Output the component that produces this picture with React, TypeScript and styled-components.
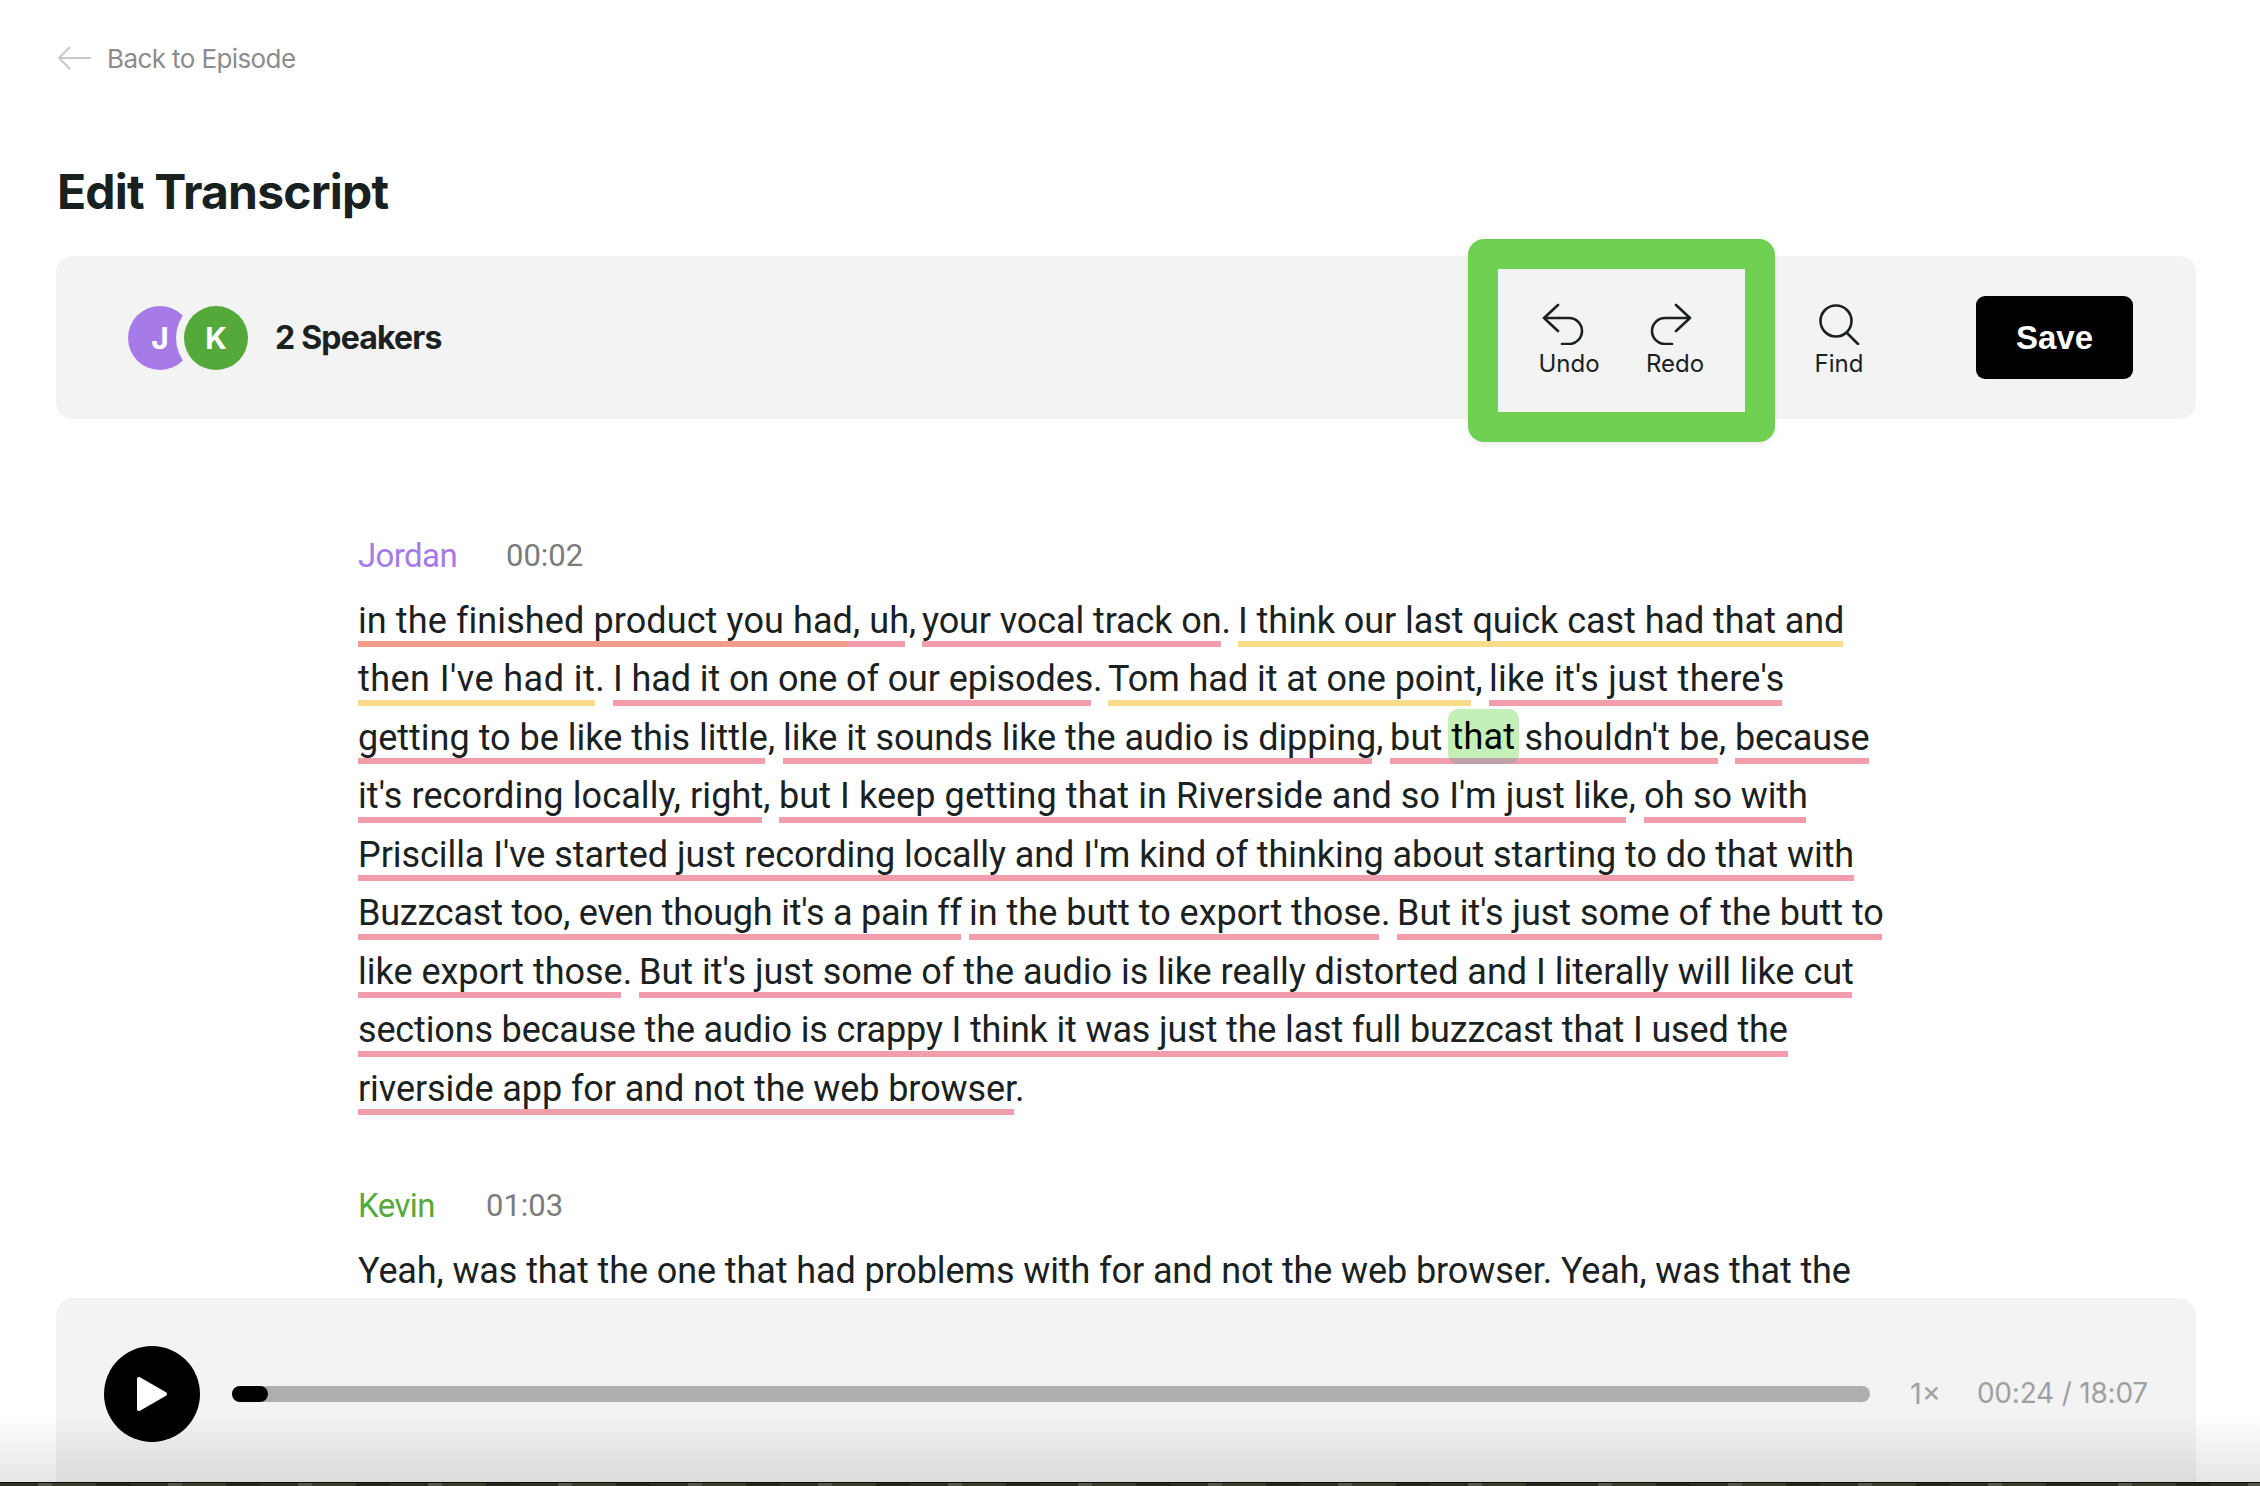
import styled, { createGlobalStyle } from "styled-components";

const GlobalStyle = createGlobalStyle`
  html, body {
    margin: 0;
    padding: 0;
    background: #ffffff;
  }
  body {
    font-family: "Inter", "Liberation Sans", sans-serif;
    color: #1a2120;
  }
`;

const Page = styled.div`
  position: relative;
  width: 2260px;
  height: 1486px;
  overflow: hidden;
  background: #ffffff;
`;

const BackLink = styled.a`
  display: flex;
  align-items: center;
  gap: 16px;
  height: 36px;
  padding: 40px 0 0 57px;
  color: #8c8c8c;
  font-size: 26px;
  letter-spacing: -0.6px;
`;

const Title = styled.h1`
  margin: 90px 0 0 57px;
  height: 52px;
  font-size: 48px;
  line-height: 52px;
  font-weight: 700;
  letter-spacing: -0.8px;
  color: #182120;
`;

const Toolbar = styled.div`
  display: flex;
  align-items: center;
  height: 163px;
  margin: 38px 64px 0 56px;
  padding: 0 63px 0 72px;
  background: #f3f3f3;
  border-radius: 16px;
`;

const Avatar = styled.div<{ $color: string; $ring?: boolean }>`
  display: flex;
  align-items: center;
  justify-content: center;
  width: 64px;
  height: 64px;
  border-radius: 50%;
  background: ${(p) => p.$color};
  color: #ffffff;
  font-size: 30px;
  font-weight: 700;
  ${(p) => p.$ring && "margin-left: -8px; box-shadow: 0 0 0 8px #f3f3f3;"}
`;

const SpeakerCount = styled.div`
  margin-left: 27px;
  font-size: 32px;
  font-weight: 700;
  letter-spacing: -0.8px;
`;

const Highlight = styled.div`
  display: flex;
  align-items: center;
  gap: 16px;
  box-sizing: border-box;
  width: 307px;
  height: 203px;
  margin: -17px 0 -23px auto;
  padding-left: 26px;
  border: 30px solid #6fd052;
  border-radius: 16px;
  background: #f3f3f3;
  box-shadow: 0 2px 6px rgba(0, 0, 0, 0.08);
`;

const Tool = styled.button<{ $left?: number; $top?: number }>`
  display: flex;
  flex-direction: column;
  align-items: center;
  gap: 4px;
  width: 90px;
  margin-left: ${(p) => p.$left ?? 0}px;
  margin-top: ${(p) => p.$top ?? 0}px;
  padding: 0;
  border: 0;
  background: none;
  color: #1a2120;
  font-family: inherit;
  font-size: 24px;
  line-height: 30px;
`;

const ToolIcon = styled.svg<{ $shift?: number }>`
  display: block;
  width: 42px;
  height: 42px;
  margin-left: ${(p) => p.$shift ?? 0}px;
  fill: none;
  stroke: #1a2120;
  stroke-width: 2.6;
  stroke-linecap: round;
  stroke-linejoin: round;
`;

const SaveButton = styled.button`
  width: 157px;
  height: 83px;
  margin-left: 92px;
  border: 0;
  border-radius: 9px;
  background: #000000;
  color: #ffffff;
  font-family: "Liberation Sans", Arial, sans-serif;
  font-size: 33px;
  font-weight: 700;
`;

const Transcript = styled.main`
  padding: 116px 0 0 358px;
  font-family: "Roboto", "Liberation Sans", sans-serif;
`;

const Block = styled.section`
  margin-bottom: 70px;
`;

const BlockHead = styled.div`
  display: flex;
  align-items: center;
  height: 40px;
  margin-bottom: 13.5px;
`;

const Speaker = styled.span<{ $color: string; $width: number }>`
  width: ${(p) => p.$width}px;
  color: ${(p) => p.$color};
  font-size: 33px;
  font-weight: 400;
  letter-spacing: -0.6px;
`;

const Stamp = styled.span`
  color: #7c7c7c;
  font-size: 31px;
`;

const Line = styled.div`
  display: flex;
  height: 58.5px;
  white-space: nowrap;
`;

const tones: Record<string, string> = {
  pink: "linear-gradient(#f19dac, #f19dac)",
  yellow: "linear-gradient(#f9dc8a, #f9dc8a)",
  mixed: "linear-gradient(90deg, #f29d8a 489px, #f19dac 489px)",
};

const Chunk = styled.span<{ $width: number; $gap: number; $tone: string; $track: number }>`
  box-sizing: border-box;
  flex: none;
  width: ${(p) => p.$width}px;
  height: 58.5px;
  margin-right: ${(p) => p.$gap}px;
  font-size: 36px;
  line-height: 64px;
  letter-spacing: ${(p) => p.$track}px;
  color: #1a2120;
  background: ${(p) => tones[p.$tone]} left bottom / 100% 6px no-repeat;
`;

const Word = styled.span`
  display: inline-block;
  height: 55px;
  margin: 3.5px -4px 0;
  padding: 0 4px;
  vertical-align: top;
  line-height: 57px;
  border-radius: 10px;
  color: #000000;
  background: linear-gradient(#c0a0a8, #c0a0a8) left bottom / 100% 6px no-repeat,
    #c4f0b8;
`;

const PlainLine = styled.div`
  font-size: 36px;
  line-height: 64px;
  letter-spacing: -0.1px;
  white-space: nowrap;
`;

const Player = styled.div`
  position: absolute;
  left: 56px;
  right: 64px;
  top: 1298px;
  bottom: 4px;
  display: flex;
  align-items: center;
  padding: 0 48px 0 48px;
  background: #f3f3f3;
  border-radius: 18px 18px 0 0;
  color: #a0a0a2;
  font-size: 29px;
  white-space: nowrap;
`;

const PlayButton = styled.button`
  display: flex;
  align-items: center;
  justify-content: center;
  flex: none;
  width: 96px;
  height: 96px;
  margin-top: 8px;
  padding: 0;
  border: 0;
  border-radius: 50%;
  background: #000000;
`;

const Track = styled.div`
  flex: none;
  width: 1638px;
  height: 16px;
  margin: 8px 40px 0 32px;
  border-radius: 8px;
  background: #aeaeb1;
`;

const TrackFill = styled.div<{ $width: number }>`
  width: ${(p) => p.$width}px;
  height: 16px;
  border-radius: 8px;
  background: #000000;
`;

const Speed = styled.span`
  width: 74px;
  margin-top: 6px;
`;

const Duration = styled.span`
  margin-top: 6px;
  font-size: 28px;
  letter-spacing: -0.2px;
`;

const BottomFade = styled.div`
  position: absolute;
  left: 0;
  right: 0;
  bottom: 4px;
  height: 70px;
  background: linear-gradient(rgba(0, 0, 0, 0), rgba(0, 0, 0, 0.1));
  pointer-events: none;
`;

const DesktopEdge = styled.div`
  position: absolute;
  left: 0;
  right: 0;
  bottom: 0;
  height: 4px;
  border-top: 1px solid #0d0d0b;
  box-sizing: border-box;
  background: repeating-linear-gradient(90deg, #2f3220 0 38px, #55564a 38px 52px, #3a3d28 52px 96px, #24261a 96px 130px);
`;

type Piece = {
  text: string;
  width: number;
  tone: string;
  gap?: number;
  track?: number;
  word?: [string, string];
};

const jordanLines: Piece[][] = [
  [
    { text: "in the finished product you had, uh,", width: 547, tone: "mixed", gap: 17, track: 0.1 },
    { text: "your vocal track on.", width: 299, tone: "pink", gap: 17, track: -0.1 },
    { text: "I think our last quick cast had that and", width: 605, tone: "yellow", track: -0.05 },
  ],
  [
    { text: "then I've had it.", width: 237, tone: "yellow", gap: 18, track: 0.45 },
    { text: "I had it on one of our episodes.", width: 478, tone: "pink", gap: 17, track: -0.1 },
    { text: "Tom had it at one point,", width: 363, tone: "yellow", gap: 18, track: -0.05 },
    { text: "like it's just there's", width: 293, tone: "pink", track: 0.3 },
  ],
  [
    { text: "getting to be like this little,", width: 407, tone: "pink", gap: 18 },
    { text: "like it sounds like the audio is dipping,", width: 589, tone: "pink", gap: 18, track: -0.05 },
    { text: "", word: ["but ", " shouldn't be,"], width: 328, tone: "pink", gap: 17, track: 0.2 },
    { text: "because", width: 134, tone: "pink", track: -0.1 },
  ],
  [
    { text: "it's recording locally, right,", width: 404, tone: "pink", gap: 17, track: 0.1 },
    { text: "but I keep getting that in Riverside and so I'm just like,", width: 847, tone: "pink", gap: 18, track: 0.08 },
    { text: "oh so with", width: 162, tone: "pink", track: -0.1 },
  ],
  [
    { text: "Priscilla I've started just recording locally and I'm kind of thinking about starting to do that with", width: 1496, tone: "pink", track: -0.06 },
  ],
  [
    { text: "Buzzcast too, even though it's a pain ff", width: 603, tone: "pink", gap: 8, track: -0.22 },
    { text: "in the butt to export those.", width: 410, tone: "pink", gap: 18 },
    { text: "But it's just some of the butt to", width: 485, tone: "pink", track: -0.05 },
  ],
  [
    { text: "like export those.", width: 263, tone: "pink", gap: 18 },
    { text: "But it's just some of the audio is like really distorted and I literally will like cut", width: 1213, tone: "pink" },
  ],
  [
    { text: "sections because the audio is crappy I think it was just the last full buzzcast that I used the", width: 1430, tone: "pink", track: -0.15 },
  ],
  [{ text: "riverside app for and not the web browser.", width: 656, tone: "pink", track: -0.08 }],
];

export default function App() {
  return (
    <Page>
      <GlobalStyle />
      <BackLink>
        <svg width="34" height="24" viewBox="0 0 34 24" fill="none" stroke="#c9c9c9" strokeWidth="2">
          <path d="M34 12H2M13 1L2 12l11 11" />
        </svg>
        Back to Episode
      </BackLink>
      <Title>Edit Transcript</Title>
      <Toolbar>
        <Avatar $color="#a67be8">J</Avatar>
        <Avatar $color="#55a93b" $ring>
          K
        </Avatar>
        <SpeakerCount>2 Speakers</SpeakerCount>
        <Highlight>
          <Tool>
            <ToolIcon viewBox="0 0 42 42" $shift={-12}>
              <path d="M16 2L2 15l14 13M2 15h25a13 13 0 0 1 0 26h-7" />
            </ToolIcon>
            Undo
          </Tool>
          <Tool>
            <ToolIcon viewBox="0 0 42 42" $shift={-8}>
              <path d="M26 2l14 13-14 13M40 15H15a13 13 0 0 0 0 26h7" />
            </ToolIcon>
            Redo
          </Tool>
        </Highlight>
        <Tool $left={19} $top={6}>
          <ToolIcon viewBox="0 0 42 42">
            <circle cx="18" cy="18" r="15.5" />
            <path d="M29 30l11 11" />
          </ToolIcon>
          Find
        </Tool>
        <SaveButton>Save</SaveButton>
      </Toolbar>
      <Transcript>
        <Block>
          <BlockHead>
            <Speaker $color="#a67be8" $width={148}>
              Jordan
            </Speaker>
            <Stamp>00:02</Stamp>
          </BlockHead>
          {jordanLines.map((pieces, i) => (
            <Line key={i}>
              {pieces.map((piece, j) => (
                <Chunk
                  key={j}
                  $width={piece.width}
                  $gap={piece.gap ?? 0}
                  $tone={piece.tone}
                  $track={piece.track ?? 0}
                >
                  {piece.word ? (
                    <>
                      {piece.word[0]}
                      <Word>that</Word>
                      {piece.word[1]}
                    </>
                  ) : (
                    piece.text
                  )}
                </Chunk>
              ))}
            </Line>
          ))}
        </Block>
        <Block>
          <BlockHead>
            <Speaker $color="#55a93b" $width={128}>
              Kevin
            </Speaker>
            <Stamp>01:03</Stamp>
          </BlockHead>
          <PlainLine>Yeah, was that the one that had problems with for and not the web browser. Yeah, was that the</PlainLine>
        </Block>
      </Transcript>
      <Player>
        <PlayButton>
          <svg width="32" height="36" viewBox="0 0 32 36" fill="#ffffff" stroke="#ffffff" strokeWidth="4" strokeLinejoin="round">
            <path d="M3 3l26 15L3 33z" />
          </svg>
        </PlayButton>
        <Track>
          <TrackFill $width={36} />
        </Track>
        <Speed>1×</Speed>
        <Duration>00:24 / 18:07</Duration>
      </Player>
      <BottomFade />
      <DesktopEdge />
    </Page>
  );
}
